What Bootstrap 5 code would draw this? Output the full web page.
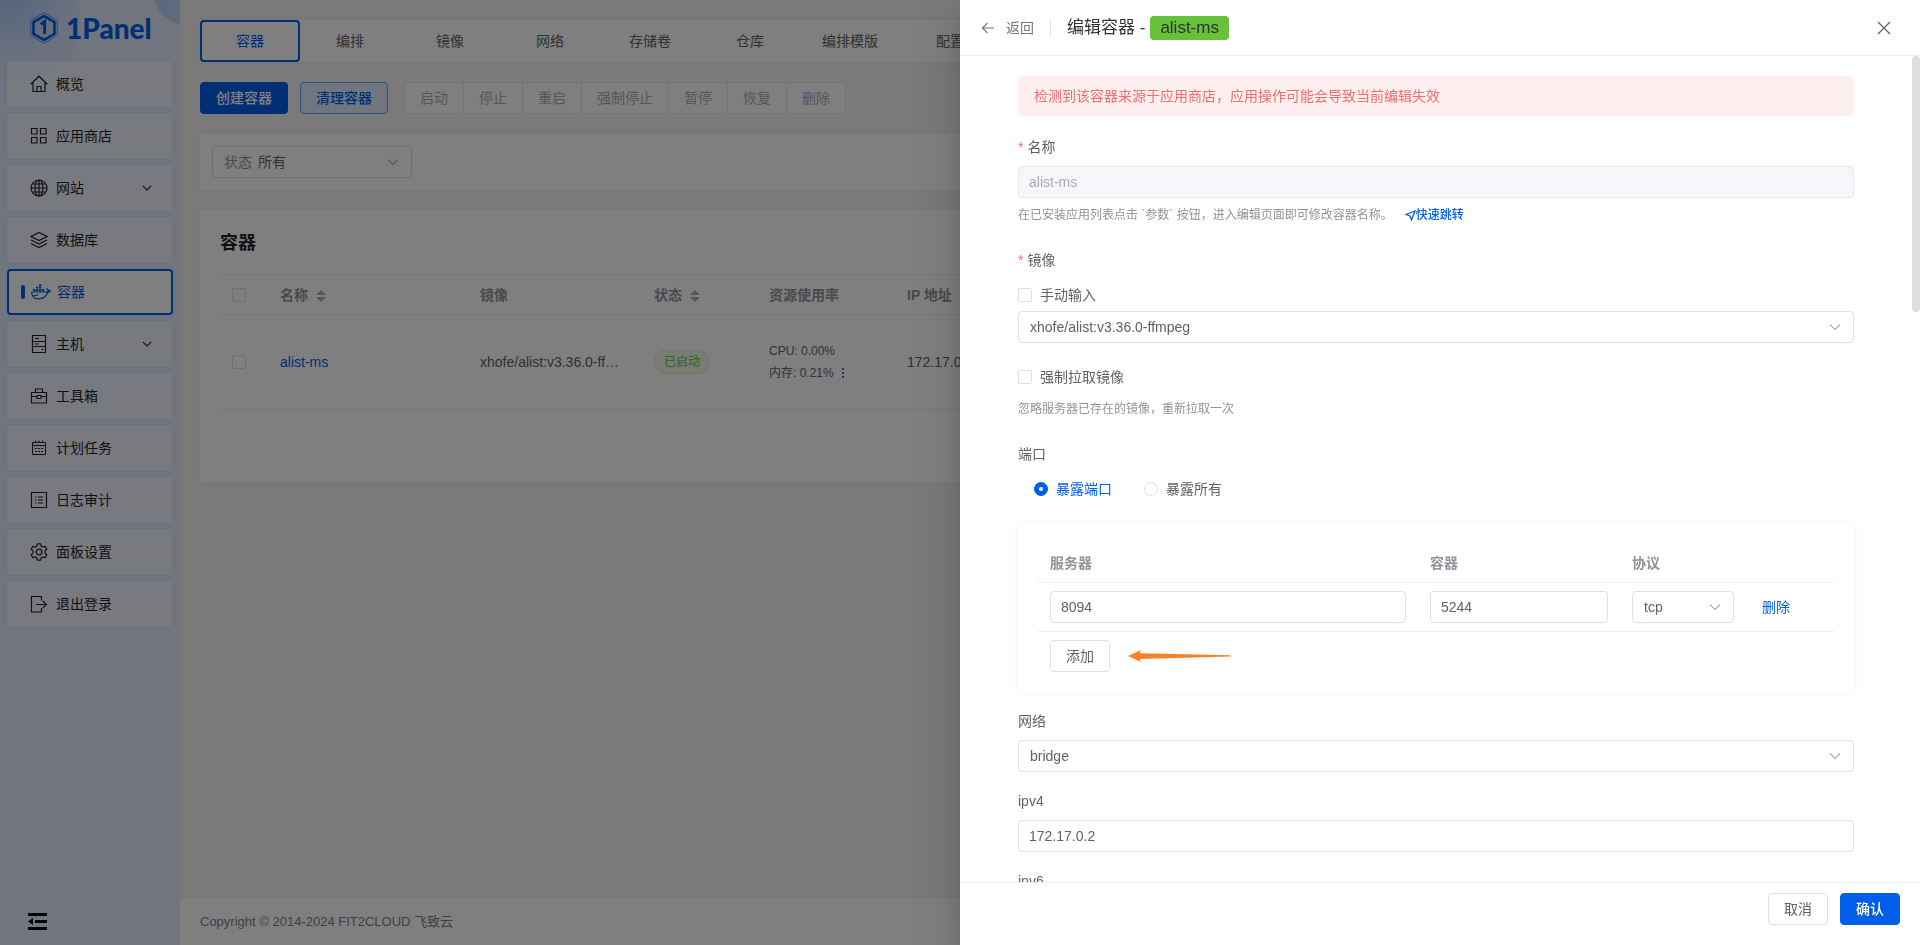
<!DOCTYPE html>
<html lang="zh-CN">
<head>
<meta charset="utf-8">
<meta name="viewport" content="width=device-width, initial-scale=1">
<title>1Panel - 容器</title>
<link href="https://cdn.jsdelivr.net/npm/bootstrap@5.3.0/dist/css/bootstrap.min.css" rel="stylesheet">
<style>
:root {
  --brand: #005eeb;
  --line: #dcdfe6;
  --line-soft: #ebeef5;
  --ink: #1f2329;
  --ink-2: #606266;
  --ink-3: #909399;
}
body {
  font-family: "Liberation Sans", "Noto Sans CJK SC", sans-serif;
  font-size: 14px;
  line-height: 22px;
  color: var(--ink-2);
  background: #f4f4f4;
  overflow: hidden;
}
a { color: var(--brand); text-decoration: none; }
.fs-12 { font-size: 12px; }

/* sidebar */
.side {
  width: 180px;
  overflow: hidden;
  position: relative;
  background: #e2ebfd;
}
.side::before, .side::after {
  content: "";
  position: absolute;
  border-radius: 50%;
}
.side::before {
  left: -80px; top: -56px; width: 160px; height: 160px;
  background: radial-gradient(circle at 55% 30%, #a9c6fb, #d6e4fc 48%, #e2ebfd 78%);
}
.side::after {
  left: 152px; top: -50px; width: 76px; height: 76px;
  background: linear-gradient(70deg, #b4cdfb, #dce8fd);
}
.side > * { position: relative; z-index: 1; }
.logo-row { height: 61px; padding: 0 0 6px 30px; gap: 8px; }
.logo-word {
  font-family: Lato, sans-serif;
  font-weight: 900;
  font-size: 28px;
  line-height: 32px;
  color: var(--brand);
}
.menu { gap: 6px; padding: 0 7px; }
.menu .nav-link {
  height: 46px;
  padding: 0 21px 0 23px;
  gap: 8px;
  color: var(--ink);
  background: rgba(255, 255, 255, .5);
  border-radius: 4px;
  box-shadow: 0 0 4px rgba(0, 94, 235, .1);
}
.menu .nav-link.active {
  background: #fff;
  color: var(--brand);
  border: 2px solid var(--brand);
  padding-left: 12px;
  gap: 6px;
}
.menu .nav-link.active::before {
  content: "";
  width: 4px; height: 14px;
  border-radius: 2px;
  background: var(--brand);
}
.ico { fill: none; stroke: currentColor; stroke-width: 1.2; flex: none; }
.foot-row { height: 48px; border-top: 1px solid #e6e6e6; }
.side .foot-row { padding-left: 28px; }

/* page */
.page { padding: 20px 20px 0; gap: 20px; }
.panel { background: #fff; border-radius: 4px; box-shadow: 0 0 6px rgba(0, 94, 235, .07); }
.tabs .nav-link {
  width: 100px; height: 42px; padding: 0;
  border: 2px solid transparent; border-radius: 4px;
  color: var(--ink-2);
}
.tabs .nav-link.active { color: var(--brand); border-color: var(--brand); }
.btn {
  --bs-btn-font-size: 14px;
  --bs-btn-line-height: 22px;
  --bs-btn-padding-x: 15px;
  --bs-btn-padding-y: 4px;
  --bs-btn-border-radius: 4px;
}
.btn-primary { --bs-btn-bg: #005eeb; --bs-btn-border-color: #005eeb; font-weight: 500; }
.btn-soft { background: #e0ecff; border-color: #66a0f5; color: var(--brand); font-weight: 500; margin: 0 16px 0 12px; }
.btn-plain { background: #fff; border-color: var(--line); color: var(--ink-2); }
.btn-plain:disabled { background: #fff; border-color: #e4e7ed; color: #a8abb2; opacity: 1; }
.form-control, .form-select {
  height: 32px;
  font-size: 14px;
  line-height: 22px;
  padding: 4px 10px;
  border-color: var(--line);
  border-radius: 4px;
  color: var(--ink-2);
}
.form-select {
  padding-left: 11px;
  background-image: url("data:image/svg+xml,%3Csvg xmlns='http://www.w3.org/2000/svg' viewBox='0 0 14 14'%3E%3Cpath d='M2 4.5l5 5 5-5' fill='none' stroke='%23a8abb2' stroke-width='1.1'/%3E%3C/svg%3E");
  background-size: 14px 14px;
  background-position: right 11px center;
}
.form-control:disabled { background: #f5f7fa; border-color: #e4e7ed; color: #a8abb2; }
.form-check-input {
  width: 14px; height: 14px; margin: 0; flex: none;
  border-color: var(--line);
}
.form-check-input[type=checkbox] { border-radius: 2px; }
.form-check-input:checked { background-color: var(--brand); border-color: var(--brand); }
.form-check-input:checked + label { color: var(--brand); }
.form-check-input:checked[type=radio] {
  background-image: url("data:image/svg+xml,%3Csvg xmlns='http://www.w3.org/2000/svg' viewBox='0 0 14 14'%3E%3Ccircle cx='7' cy='7' r='2.4' fill='%23fff'/%3E%3C/svg%3E");
}
.filter { padding: 12px; }
.state-box {
  width: 200px; height: 32px; padding-left: 11px;
  border: 1px solid var(--line); border-radius: 4px;
}
.state-box label { color: var(--ink-3); }
.state-box .form-select { border: 0; padding: 0 0 0 6px; height: 30px; background-color: transparent; }
.list-panel { padding: 20px 20px 72px; }
.list-title { font-size: 18px; line-height: 26px; font-weight: 700; color: var(--ink); margin: 0 0 18px; }
.grid-table { table-layout: fixed; width: 100%; border-collapse: separate; border-spacing: 0; }
.grid-table th, .grid-table td { padding: 0 12px; border-bottom: 1px solid var(--line-soft); }
.grid-table th { height: 40px; color: var(--ink-3); font-weight: 700; }
.list-table th { height: 41px; border-top: 1px solid var(--line-soft); }
.list-table td { height: 95px; }
.list-table .form-check-input { display: block; }
.c-check { width: 48px; } .c-name { width: 200px; } .c-img { width: 174px; }
.c-state { width: 115px; } .c-use { width: 138px; }
.pill {
  display: inline-block;
  font-size: 12px;
  padding: 0 9px;
  border: 1px solid #d9efcc; border-radius: 12px;
  background: #eef9e8; color: #67c23a;
}
.copy { padding-left: 20px; background: #fff; color: #7b7e86; }
.copy small { font-size: 13px; }

/* drawer */
.offcanvas.drawer {
  --bs-offcanvas-width: 50%;
  border: 0;
  color: var(--ink-2);
  box-shadow: 0 16px 48px 16px rgba(0, 0, 0, .08), 0 12px 32px rgba(0, 0, 0, .12), 0 8px 16px -8px rgba(0, 0, 0, .16);
}
.drawer-head { height: 56px; padding: 0 28px 0 21px; border-bottom: 1px solid #ecedf0; }
.back { gap: 11px; color: #73767a; }
.rule-v { width: 1px; height: 16px; background: var(--line); margin: 0 16px; }
.drawer-title { font-size: 17px; line-height: 24px; font-weight: 400; color: #303133; margin: 0; gap: 5px; }
.tag { height: 24px; padding: 0 10px; border-radius: 4px; background: #67c23a; }
.plain-btn { background: none; border: 0; padding: 0; }
.scroll-area { overflow-y: auto; scrollbar-width: none; padding: 20px 66px 0 58px; }
.scroll-area::-webkit-scrollbar { display: none; }
.scroll-thumb {
  position: absolute; right: 0; top: 0;
  width: 8px; height: 31%;
  border-radius: 4px; background: #dddee0;
}
.notice { height: 40px; padding: 9px 16px; margin-bottom: 20px; border-radius: 4px; background: #fef0f0; color: #f56c6c; }
.field { margin-bottom: 18px; }
.field > .form-label { display: block; margin-bottom: 8px; }
.req::before { content: "*"; color: #f56c6c; margin-right: 4px; }
.line-32 { height: 32px; line-height: 32px; gap: 8px; }
.radios { gap: 32px; padding-left: 16px; }
.hint { font-size: 12px; line-height: 32px; color: var(--ink-3); }
.form-control + .hint { padding-top: 1px; gap: 12px; }
.hint a { font-weight: 500; }
.ports { padding: 20px; margin-bottom: 18px; }
.ports td { height: 49px; padding-top: 8px; padding-bottom: 8px; }
.ports .last td { height: 40px; padding-bottom: 0; border: 0; }
.c-cont { width: 202px; } .c-proto { width: 126px; } .c-act { width: 88px; }
.drawer-foot { height: 63px; padding: 10px 20px; border-top: 1px solid #ecedf0; gap: 12px; }
</style>
</head>
<body class="vh-100">
<div class="d-flex h-100">
  <aside class="side d-flex flex-column flex-shrink-0">
    <div class="logo-row d-flex align-items-center">
      <svg width="28" height="32" viewBox="0 0 28 32" fill="none" stroke="#005eeb" aria-hidden="true">
        <path d="M14 .8 27.2 8.3v15.4L14 31.2.8 23.700V8.300z" stroke-width=".8" opacity=".7"/>
        <path d="M14 4 24.500 10v12L14 28 3.500 22V10z" stroke-width="2.600"/>
        <path d="M10.800 12.300 14.600 9.500V22" stroke-width="3"/>
      </svg>
      <span class="logo-word">1Panel</span>
    </div>
    <nav class="menu nav flex-column flex-nowrap flex-grow-1">
      <a class="nav-link d-flex align-items-center" href="#"><svg class="ico" width="18" height="18" viewBox="0 0 18 18"><path d="M.7 9.200 9 1.200l8.300 8M3 7.500v9h12v-9M7 16.500v-5h4v5"/></svg>概览</a>
      <a class="nav-link d-flex align-items-center" href="#"><svg class="ico" width="18" height="18" viewBox="0 0 18 18"><path d="M1.500 1.500h5.500v5.500H1.500zM10.500 1.500H16v5.500h-5.500zM1.500 10.500h5.500V16H1.500zM10.500 10.500H16V16h-5.500z"/></svg>应用商店</a>
      <a class="nav-link d-flex align-items-center" href="#"><svg class="ico" width="18" height="18" viewBox="0 0 18 18"><circle cx="9" cy="9" r="8"/><ellipse cx="9" cy="9" rx="4" ry="8"/><path d="M9 1v16M1 9h16M2.300 5h13.400M2.300 13h13.400"/></svg>网站<svg class="ico ms-auto" width="10" height="10" viewBox="0 0 10 10"><path d="M.8 2.800 5 7l4.200-4.200" stroke-width="1.100"/></svg></a>
      <a class="nav-link d-flex align-items-center" href="#"><svg class="ico" width="18" height="18" viewBox="0 0 18 18"><path d="M9 1.500 17 5.500 9 9.500 1 5.500zM1 9l8 4 8-4M1 12.500l8 4 8-4"/></svg>数据库</a>
      <a class="nav-link active d-flex align-items-center" href="#" aria-current="page"><svg class="ico" width="20" height="16" viewBox="0 0 20 16"><path d="M.7 8h14.600c1.600 0 2.400-1 2.200-2.200M.7 8c-.2 4.500 2.600 6.800 6.800 6.800 4.600 0 7.600-2 9-6.300 1.600.1 2.600-.4 3-1.500-.8-.6-1.800-.7-2.500-.4-.1-1-.6-1.800-1.400-2.300M1.500 11.500c2.500.6 4 .2 5.500-.8"/><path d="M2 5h2.300v2.300H2zM5 5h2.300v2.300H5zM8 5h2.300v2.300H8zM11 5h2.300v2.300H11zM5 2.500h2.300v1.900H5zM8 2.500h2.300v1.900H8zM8 .2h2.300V2H8z" fill="currentColor" stroke="none"/></svg>容器</a>
      <a class="nav-link d-flex align-items-center" href="#"><svg class="ico" width="18" height="18" viewBox="0 0 18 18"><path d="M2.500.5h13v17h-13zM2.500 6.500h13M2.500 11.500h13M5 3.500h4M5 9h4M11.500 14.500h2"/></svg>主机<svg class="ico ms-auto" width="10" height="10" viewBox="0 0 10 10"><path d="M.8 2.800 5 7l4.200-4.200" stroke-width="1.100"/></svg></a>
      <a class="nav-link d-flex align-items-center" href="#"><svg class="ico" width="18" height="18" viewBox="0 0 18 18"><path d="M1.500 5.500h15v10.500h-15zM5.500 5.500V2h7v3.500M1.500 9.500h5.500M11 9.500h5.500M7 8.500h4v3H7z"/></svg>工具箱</a>
      <a class="nav-link d-flex align-items-center" href="#"><svg class="ico" width="18" height="18" viewBox="0 0 18 18"><path d="M2.500 3.500h13v12h-13zM2.500 6.500h13M5.500 1.500v2M9 1.500v2M12.500 1.500v2" stroke-width="1"/><path d="M5 9.500h2M8 9.500h2M11 9.500h2M5 12.500h2M8 12.500h2M11 12.500h2" stroke-width="1.100"/></svg>计划任务</a>
      <a class="nav-link d-flex align-items-center" href="#"><svg class="ico" width="18" height="18" viewBox="0 0 18 18"><path d="M1.500 1.500h15v15h-15zM5 6h1.500M8 6h5M5 9h1.500M8 9h5M5 12h1.500M8 12h5"/></svg>日志审计</a>
      <a class="nav-link d-flex align-items-center" href="#"><svg class="ico" width="18" height="18" viewBox="0 0 18 18"><path d="M7.300.8h3.400l.5 2.400 1.600.9 2.300-.8 1.700 2.900L15 7.900v2.200l1.800 1.700-1.700 2.900-2.300-.8-1.600.9-.5 2.400H7.300l-.5-2.400-1.600-.9-2.300.8-1.700-2.900L3 10.100V7.900L1.200 6.200l1.700-2.900 2.300.8 1.600-.9z" stroke-linejoin="round"/><circle cx="9" cy="9" r="2.800"/></svg>面板设置</a>
      <a class="nav-link d-flex align-items-center" href="#"><svg class="ico" width="18" height="18" viewBox="0 0 18 18"><path d="M11.500 5.500v-4h-10v15.500h10v-4M6 9.500h10.500M12.800 5.900l3.600 3.600-3.600 3.600"/></svg>退出登录</a>
    </nav>
    <div class="foot-row d-flex align-items-center">
      <button class="plain-btn d-flex" type="button" aria-label="收起菜单"><svg width="19" height="17" viewBox="0 0 19 17"><path d="M0 0h19v3H0zM7 7h12v3H7zM0 14h19v3H0zM0 8.500 5 5v7z"/></svg></button>
    </div>
  </aside>

  <div class="d-flex flex-column flex-grow-1 overflow-hidden">
    <main class="page d-flex flex-column flex-grow-1">
      <nav class="tabs nav panel flex-nowrap">
        <a class="nav-link active d-flex align-items-center justify-content-center" href="#">容器</a>
        <a class="nav-link d-flex align-items-center justify-content-center" href="#">编排</a>
        <a class="nav-link d-flex align-items-center justify-content-center" href="#">镜像</a>
        <a class="nav-link d-flex align-items-center justify-content-center" href="#">网络</a>
        <a class="nav-link d-flex align-items-center justify-content-center" href="#">存储卷</a>
        <a class="nav-link d-flex align-items-center justify-content-center" href="#">仓库</a>
        <a class="nav-link d-flex align-items-center justify-content-center" href="#">编排模版</a>
        <a class="nav-link d-flex align-items-center justify-content-center" href="#">配置</a>
      </nav>
      <div class="d-flex">
        <button class="btn btn-primary" type="button">创建容器</button>
        <button class="btn btn-soft" type="button">清理容器</button>
        <div class="btn-group">
          <button class="btn btn-plain" type="button" disabled>启动</button>
          <button class="btn btn-plain" type="button" disabled>停止</button>
          <button class="btn btn-plain" type="button" disabled>重启</button>
          <button class="btn btn-plain" type="button" disabled>强制停止</button>
          <button class="btn btn-plain" type="button" disabled>暂停</button>
          <button class="btn btn-plain" type="button" disabled>恢复</button>
          <button class="btn btn-plain" type="button" disabled>删除</button>
        </div>
      </div>
      <div class="panel filter">
        <div class="state-box d-flex align-items-center">
          <label class="flex-shrink-0" for="state">状态</label>
          <select class="form-select" id="state"><option>所有</option></select>
        </div>
      </div>
      <section class="panel list-panel">
        <h1 class="list-title">容器</h1>
        <table class="grid-table list-table">
          <colgroup><col class="c-check"><col class="c-name"><col class="c-img"><col class="c-state"><col class="c-use"><col></colgroup>
          <thead>
            <tr>
              <th><input class="form-check-input" type="checkbox" aria-label="全选"></th>
              <th>名称 <svg class="ms-1" width="10" height="12" viewBox="0 0 10 12" fill="#a8abb2"><path d="M5 0l5 5H0zM5 12l5-5H0z"/></svg></th>
              <th>镜像</th>
              <th>状态 <svg class="ms-1" width="10" height="12" viewBox="0 0 10 12" fill="#a8abb2"><path d="M5 0l5 5H0zM5 12l5-5H0z"/></svg></th>
              <th>资源使用率</th>
              <th>IP 地址</th>
            </tr>
          </thead>
          <tbody>
            <tr>
              <td><input class="form-check-input" type="checkbox" aria-label="选择 alist-ms"></td>
              <td><a href="#">alist-ms</a></td>
              <td class="text-truncate">xhofe/alist:v3.36.0-ffmpeg</td>
              <td><span class="pill">已启动</span></td>
              <td class="fs-12"><div>CPU: 0.00%</div><div class="d-flex align-items-center gap-2">内存: 0.21% <svg width="3" height="11" viewBox="0 0 3 11" fill="#0c87cf"><path d="M0 0h2v2H0zM0 4h2v2H0zM0 8h2v2H0z"/></svg></div></td>
              <td>172.17.0.2</td>
            </tr>
          </tbody>
        </table>
      </section>
    </main>
    <footer class="foot-row copy d-flex align-items-center"><small>Copyright © 2014-2024 FIT2CLOUD 飞致云</small></footer>
  </div>
</div>

<div class="offcanvas-backdrop show"></div>
<div class="offcanvas offcanvas-end drawer show" data-bs-backdrop="false" role="dialog" aria-labelledby="drawer-title">
  <header class="drawer-head d-flex align-items-center flex-shrink-0">
    <button class="plain-btn back d-flex align-items-center" type="button"><svg class="ico" width="14" height="14" viewBox="0 0 14 14"><path d="M13 7H1.500M6.500 2 1.500 7l5 5" stroke-width="1.100"/></svg>返回</button>
    <span class="rule-v"></span>
    <h2 class="drawer-title d-flex align-items-center" id="drawer-title">编辑容器 - <span class="tag">alist-ms</span></h2>
    <button class="plain-btn ms-auto d-flex" type="button" aria-label="关闭"><svg class="ico" width="16" height="16" viewBox="0 0 16 16"><path d="M2 2l12 12M14 2 2 14" stroke="#5f6266"/></svg></button>
  </header>
  <div class="position-relative d-flex flex-column flex-grow-1 overflow-hidden">
    <form class="scroll-area flex-grow-1">
      <div class="notice" role="alert">检测到该容器来源于应用商店，应用操作可能会导致当前编辑失效</div>
      <div class="field">
        <label class="form-label req" for="cname">名称</label>
        <input class="form-control" id="cname" type="text" value="alist-ms" disabled>
        <div class="hint d-flex">在已安装应用列表点击 `参数` 按钮，进入编辑页面即可修改容器名称。
          <a class="d-flex align-items-center" href="#"><svg width="11" height="11" viewBox="0 0 11 11" fill="none" stroke="currentColor" stroke-width="1.300"><path d="M10 1 1 4.500l4 1.500 1.500 4z"/></svg>快速跳转</a></div>
      </div>
      <div class="field">
        <label class="form-label req" for="image">镜像</label>
        <div class="line-32 d-flex align-items-center"><input class="form-check-input" type="checkbox" id="manual"><label for="manual">手动输入</label></div>
        <select class="form-select" id="image"><option>xhofe/alist:v3.36.0-ffmpeg</option></select>
      </div>
      <div class="field">
        <div class="line-32 d-flex align-items-center"><input class="form-check-input" type="checkbox" id="pull"><label for="pull">强制拉取镜像</label></div>
        <div class="hint">忽略服务器已存在的镜像，重新拉取一次</div>
      </div>
      <div class="field">
        <span class="form-label">端口</span>
        <div class="radios d-flex">
          <div class="line-32 d-flex align-items-center"><input class="form-check-input" type="radio" name="expose" id="ex1" checked><label for="ex1">暴露端口</label></div>
          <div class="line-32 d-flex align-items-center"><input class="form-check-input" type="radio" name="expose" id="ex2"><label for="ex2">暴露所有</label></div>
        </div>
      </div>
      <div class="ports panel">
        <table class="grid-table">
          <colgroup><col><col class="c-cont"><col class="c-proto"><col class="c-act"></colgroup>
          <thead><tr><th>服务器</th><th>容器</th><th>协议</th><th></th></tr></thead>
          <tbody>
            <tr>
              <td><input class="form-control" type="text" value="8094" aria-label="服务器端口"></td>
              <td><input class="form-control" type="text" value="5244" aria-label="容器端口"></td>
              <td><select class="form-select" aria-label="协议"><option>tcp</option></select></td>
              <td><a class="ms-1" href="#">删除</a></td>
            </tr>
            <tr class="last">
              <td colspan="4"><div class="d-flex align-items-center gap-3"><button class="btn btn-plain" type="button">添加</button>
                <svg width="106" height="14" viewBox="0 0 106 14" fill="#ff7f27" aria-hidden="true"><path d="M2 7 15 1l-1.200 3.300 90.500 2v1.200L13.800 10 15 13z"/></svg></div></td>
            </tr>
          </tbody>
        </table>
      </div>
      <div class="field">
        <label class="form-label" for="net">网络</label>
        <select class="form-select" id="net"><option>bridge</option></select>
      </div>
      <div class="field">
        <label class="form-label" for="ip4">ipv4</label>
        <input class="form-control" id="ip4" type="text" value="172.17.0.2">
      </div>
      <div class="field">
        <label class="form-label" for="ip6">ipv6</label>
        <input class="form-control" id="ip6" type="text">
      </div>
    </form>
    <div class="scroll-thumb"></div>
  </div>
  <footer class="drawer-foot d-flex justify-content-end align-items-start flex-shrink-0">
    <button class="btn btn-plain" type="button">取消</button>
    <button class="btn btn-primary" type="button">确认</button>
  </footer>
</div>
<script src="https://cdn.jsdelivr.net/npm/bootstrap@5.3.0/dist/js/bootstrap.bundle.min.js"></script>
</body>
</html>
